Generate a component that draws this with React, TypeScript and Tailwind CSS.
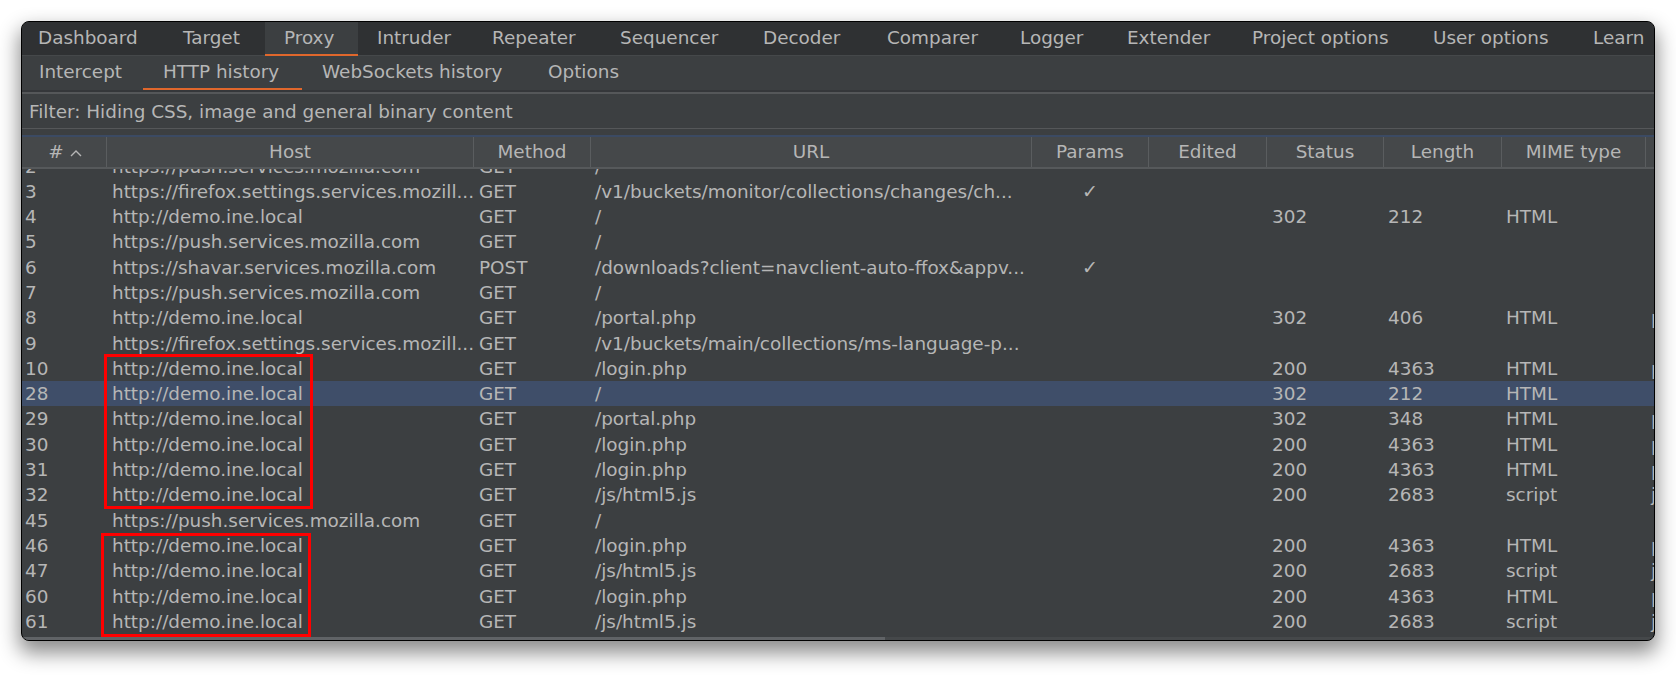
import React from "react";

type Row = {
  n: string;
  host: string;
  method: string;
  url: string;
  params?: boolean;
  status?: string;
  length?: string;
  mime?: string;
  ext?: string;
  sel?: boolean;
};

const rows: Row[] = [
  { n: "2", host: "https://push.services.mozilla.com", method: "GET", url: "/" },
  { n: "3", host: "https://firefox.settings.services.mozill...", method: "GET", url: "/v1/buckets/monitor/collections/changes/ch...", params: true },
  { n: "4", host: "http://demo.ine.local", method: "GET", url: "/", status: "302", length: "212", mime: "HTML" },
  { n: "5", host: "https://push.services.mozilla.com", method: "GET", url: "/" },
  { n: "6", host: "https://shavar.services.mozilla.com", method: "POST", url: "/downloads?client=navclient-auto-ffox&appv...", params: true },
  { n: "7", host: "https://push.services.mozilla.com", method: "GET", url: "/" },
  { n: "8", host: "http://demo.ine.local", method: "GET", url: "/portal.php", status: "302", length: "406", mime: "HTML", ext: "php" },
  { n: "9", host: "https://firefox.settings.services.mozill...", method: "GET", url: "/v1/buckets/main/collections/ms-language-p..." },
  { n: "10", host: "http://demo.ine.local", method: "GET", url: "/login.php", status: "200", length: "4363", mime: "HTML", ext: "php" },
  { n: "28", host: "http://demo.ine.local", method: "GET", url: "/", status: "302", length: "212", mime: "HTML", sel: true },
  { n: "29", host: "http://demo.ine.local", method: "GET", url: "/portal.php", status: "302", length: "348", mime: "HTML", ext: "php" },
  { n: "30", host: "http://demo.ine.local", method: "GET", url: "/login.php", status: "200", length: "4363", mime: "HTML", ext: "php" },
  { n: "31", host: "http://demo.ine.local", method: "GET", url: "/login.php", status: "200", length: "4363", mime: "HTML", ext: "php" },
  { n: "32", host: "http://demo.ine.local", method: "GET", url: "/js/html5.js", status: "200", length: "2683", mime: "script", ext: "js" },
  { n: "45", host: "https://push.services.mozilla.com", method: "GET", url: "/" },
  { n: "46", host: "http://demo.ine.local", method: "GET", url: "/login.php", status: "200", length: "4363", mime: "HTML", ext: "php" },
  { n: "47", host: "http://demo.ine.local", method: "GET", url: "/js/html5.js", status: "200", length: "2683", mime: "script", ext: "js" },
  { n: "60", host: "http://demo.ine.local", method: "GET", url: "/login.php", status: "200", length: "4363", mime: "HTML", ext: "php" },
  { n: "61", host: "http://demo.ine.local", method: "GET", url: "/js/html5.js", status: "200", length: "2683", mime: "script", ext: "js" },
];

const topTabs: { label: string; w: string; active?: boolean }[] = [
  { label: "Dashboard", w: "w-[142px] pl-[16px]" },
  { label: "Target", w: "w-[101px] pl-[19px]" },
  { label: "Proxy", w: "w-[93px] pl-[19px]", active: true },
  { label: "Intruder", w: "w-[115px] pl-[19px]" },
  { label: "Repeater", w: "w-[128px] pl-[19px]" },
  { label: "Sequencer", w: "w-[143px] pl-[19px]" },
  { label: "Decoder", w: "w-[124px] pl-[19px]" },
  { label: "Comparer", w: "w-[133px] pl-[19px]" },
  { label: "Logger", w: "w-[107px] pl-[19px]" },
  { label: "Extender", w: "w-[125px] pl-[19px]" },
  { label: "Project options", w: "w-[181px] pl-[19px]" },
  { label: "User options", w: "w-[160px] pl-[19px]" },
  { label: "Learn", w: "w-[80px] pl-[19px]" },
];

const subTabs: { label: string; w: string; active?: boolean }[] = [
  { label: "Intercept", w: "w-[121px] pl-[17px]" },
  { label: "HTTP history", w: "w-[159px] pl-[20px]", active: true },
  { label: "WebSockets history", w: "w-[226px] pl-[20px]" },
  { label: "Options", w: "w-[120px] pl-[20px]" },
];

const SEP = "border-r border-[#5a5d5f]";

export default function App() {
  return (
    <div className="w-[1676px] h-[678px] bg-white pt-[21px] pl-[21px] font-['DejaVu_Sans',sans-serif] text-[18.4px] text-[#b6b6b6]">
      <div className="w-[1634px] h-[620px] rounded-[8px] border border-black overflow-hidden bg-[#3c3f41] flex flex-col shadow-[0_10px_20px_2px_rgba(0,0,0,0.45)]">
        {/* Top tab bar */}
        <div className="h-[34px] shrink-0 flex bg-[#2f3133] whitespace-nowrap overflow-hidden">
          {topTabs.map((t) => (
            <div
              key={t.label}
              className={`${t.w} shrink-0 h-full leading-[32px] ${
                t.active ? "bg-[#3c3f41] border-b-2 border-[#e0672c]" : "border-b border-[#45484a]"
              }`}
            >
              {t.label}
            </div>
          ))}
          <div className="flex-1 border-b border-[#45484a]" />
        </div>
        {/* Sub tab bar */}
        <div className="h-[34px] shrink-0 flex bg-[#3c3f41] whitespace-nowrap">
          {subTabs.map((t) => (
            <div
              key={t.label}
              className={`${t.w} shrink-0 h-full leading-[32px] ${
                t.active ? "border-b-2 border-[#e0672c]" : ""
              }`}
            >
              {t.label}
            </div>
          ))}
        </div>
        {/* separator */}
        <div className="h-[5px] shrink-0 flex flex-col">
          <div className="h-[2px] bg-[#35373a]" />
          <div className="h-[2px] bg-[#555759]" />
          <div className="h-[1px] bg-[#3c3f41]" />
        </div>
        {/* Filter bar */}
        <div className="h-[34px] shrink-0 pl-[7px] leading-[33px] border-b border-[#555759] bg-[#3c3f41] whitespace-nowrap">
          Filter: Hiding CSS, image and general binary content
        </div>
        {/* gap + blue line */}
        <div className="h-[8px] shrink-0 flex flex-col">
          <div className="h-[6px] bg-[#3c3f41]" />
          <div className="h-[2px] bg-[#3b4a63]" />
        </div>
        {/* Header */}
        <div className="h-[32px] shrink-0 flex bg-[#45484a] border-b-2 border-[#56595b] whitespace-nowrap overflow-hidden">
          <div className={`w-[85px] shrink-0 flex items-center justify-center gap-[6px] pl-[2px] ${SEP}`}>
            <span>#</span>
            <svg width="12" height="8" viewBox="0 0 12 8" className="mt-[1px]">
              <path d="M1 7 L6 2 L11 7" fill="none" stroke="#b6b6b6" strokeWidth="1.4" />
            </svg>
          </div>
          <div className={`w-[367px] shrink-0 flex items-center justify-center ${SEP}`}>Host</div>
          <div className={`w-[117px] shrink-0 flex items-center justify-center ${SEP}`}>Method</div>
          <div className={`w-[441px] shrink-0 flex items-center justify-center ${SEP}`}>URL</div>
          <div className={`w-[117px] shrink-0 flex items-center justify-center ${SEP}`}>Params</div>
          <div className={`w-[118px] shrink-0 flex items-center justify-center ${SEP}`}>Edited</div>
          <div className={`w-[117px] shrink-0 flex items-center justify-center ${SEP}`}>Status</div>
          <div className={`w-[118px] shrink-0 flex items-center justify-center ${SEP}`}>Length</div>
          <div className={`w-[144px] shrink-0 flex items-center justify-center ${SEP}`}>MIME type</div>
          <div className="w-[120px] shrink-0 flex items-center pl-[20px]">Extension</div>
        </div>
        {/* Body */}
        <div className="relative h-[468px] shrink-0 overflow-hidden">
          <div className="-mt-[15.5px]">
            {rows.map((r) => (
              <div
                key={r.n}
                className={`flex h-[25.3px] leading-[25.3px] whitespace-nowrap ${r.sel ? "bg-[#3f4e69]" : ""}`}
              >
                <div className="w-[85px] shrink-0 pl-[3px] overflow-hidden">{r.n}</div>
                <div className="w-[367px] shrink-0 pl-[5px] overflow-hidden">{r.host}</div>
                <div className="w-[117px] shrink-0 pl-[5px] overflow-hidden">{r.method}</div>
                <div className="w-[441px] shrink-0 pl-[4px] overflow-hidden">{r.url}</div>
                <div className="w-[117px] shrink-0 pl-[50px] overflow-hidden text-[19px]">{r.params ? "✓" : ""}</div>
                <div className="w-[118px] shrink-0 overflow-hidden"></div>
                <div className="w-[117px] shrink-0 pl-[5px] overflow-hidden">{r.status ?? ""}</div>
                <div className="w-[118px] shrink-0 pl-[4px] overflow-hidden">{r.length ?? ""}</div>
                <div className="w-[144px] shrink-0 pl-[4px] overflow-hidden">{r.mime ?? ""}</div>
                <div className="w-[80px] shrink-0 pl-[5px] overflow-hidden">{r.ext ?? ""}</div>
              </div>
            ))}
          </div>
          {/* annotation boxes */}
          <div className="absolute left-[82px] top-[185px] w-[209px] h-[155px] border-[3px] border-[#ff0000]" />
          <div className="absolute left-[79px] top-[364px] w-[210px] h-[104px] border-[3px] border-[#ff0000]" />
        </div>
        {/* horizontal scrollbar */}
        <div className="h-[3px] shrink-0 bg-[#45484a] flex">
          <div className="w-[863px] h-full bg-[#606366]" />
        </div>
      </div>
    </div>
  );
}
